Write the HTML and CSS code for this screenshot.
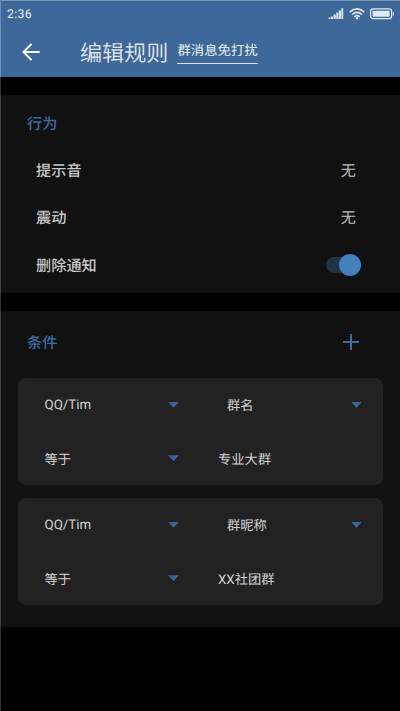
FILE: index.html
```
<!DOCTYPE html>
<html lang="zh-CN">
<head>
<meta charset="utf-8">
<title>编辑规则</title>
<link rel="stylesheet" href="styles.css">
</head>
<body>
<div class="screen">
  <header class="header">
    <div class="status">
      <span class="time">2:36</span>
      <div class="status-icons">
        <svg width="16" height="12" viewBox="0 0 16 12" fill="#e0e8f1"><path d="M.5 9.5h2V11h-2zM3.1 8.4h2V11h-2zM5.7 6.6h2V11h-2zM8.3 4.6h2V11h-2zM10.9 2.5h2V11h-2zM13.4.3h1.8V11h-1.8z"/></svg>
        <svg width="16" height="12" viewBox="0 0 16 12" fill="none" stroke="#e0e8f1" stroke-width="1.6"><path d="M.7 4.1Q8-2.2 15.3 4.1M3 6.5Q8 2.3 13 6.5M5.3 8.8Q8 6.6 10.7 8.8"/><circle cx="8" cy="10.3" r="1.2" fill="#e0e8f1" stroke="none"/></svg>
        <svg width="24" height="12" viewBox="0 0 24 12"><rect x=".6" y=".9" width="21" height="9.8" rx="2.6" fill="none" stroke="#e0e8f1" stroke-width="1.2"/><rect x="2.6" y="2.8" width="17" height="6" rx=".8" fill="#e0e8f1"/><path d="M22.7 4.2h1.2v3.2h-1.2z" fill="#e0e8f1"/></svg>
      </div>
    </div>
    <div class="toolbar">
      <svg class="back" width="18" height="18" viewBox="0 0 18 18" fill="none" stroke="#fff" stroke-width="2"><path d="M9.6.9L1.5 9l8.1 8.1M1.5 9h16.2"/></svg>
      <h1 class="title">编辑规则</h1>
      <span class="rule-name">群消息免打扰</span>
    </div>
  </header>

  <section class="panel">
    <div class="panel-head"><h2>行为</h2></div>
    <div class="setting"><span class="label">提示音</span><span class="value">无</span></div>
    <div class="setting"><span class="label">震动</span><span class="value">无</span></div>
    <div class="setting"><span class="label">删除通知</span><span class="switch"><span class="knob"></span></span></div>
  </section>

  <section class="panel conditions">
    <div class="panel-head"><h2>条件</h2>
      <svg width="16" height="16" viewBox="0 0 16 16" stroke="#3d6ba4" stroke-width="2"><path d="M8 0v16M0 8h16"/></svg>
    </div>
    <div class="card">
      <div class="select"><span class="latin">QQ/Tim</span><i class="caret"></i></div>
      <div class="select indent">群名<i class="caret"></i></div>
      <div class="select">等于<i class="caret"></i></div>
      <div class="select">专业大群</div>
    </div>
    <div class="card">
      <div class="select"><span class="latin">QQ/Tim</span><i class="caret"></i></div>
      <div class="select indent">群昵称<i class="caret"></i></div>
      <div class="select">等于<i class="caret"></i></div>
      <div class="select">XX社团群</div>
    </div>
  </section>
</div>
</body>
</html>
```
FILE: styles.css
```
* { box-sizing: border-box; }
body {
  margin: 0;
  background: #000;
  color: #d2d2d2;
  font-family: Roboto, "Noto Sans CJK SC", sans-serif;
  text-rendering: geometricPrecision;
}
.screen {
  height: 711px;
  overflow: hidden;
  box-shadow: inset 1px 0 #303030;
}
.header {
  height: 77px;
  background: #3e6899;
  border-top: 1px solid #7798b2;
  border-left: 1px solid #6c90b4;
}
.status {
  height: 26px;
  display: flex;
  align-items: center;
  justify-content: space-between;
  padding: 0 6px;
}
.time { font: 400 12.2px Roboto, sans-serif; color: #eaf0f6; letter-spacing: .4px; }
.status-icons { display: flex; gap: 5px; }
.toolbar { height: 50px; display: flex; align-items: center; padding-left: 21px; }
.title { margin: 3px 0 0 40px; font-size: 22.1px; font-weight: 350; line-height: 50px; color: #e2e6ec; }
.rule-name {
  margin: -1px 0 0 9px;
  padding-top: 2px;
  font-size: 13.4px;
  line-height: 22px;
  color: #e8edf3;
  border-bottom: 1px solid #d5dfe9;
}
.panel {
  height: 198px;
  margin-top: 18px;
  padding: 4px 18px 0;
  background: #111;
  border-left: 1px solid #414141;
}
.conditions { height: 316px; }
.panel-head { height: 48px; display: flex; align-items: center; justify-content: space-between; padding: 0 23px 0 8px; }
.panel-head h2 { margin: 0; padding-top: 2px; font-size: 15.2px; line-height: 24px; font-weight: 500; color: #3d6ba4; }
.conditions .panel-head { height: 54px; }
.setting { height: 47.3px; display: flex; align-items: center; justify-content: space-between; padding: 0 26px 0 17px; font-size: 15.2px; line-height: 22px; }
.label, .value { padding-top: 1px; }
.label { font-weight: 500; color: #c8c8c8; }
.value { color: #bdbdbd; }
.switch { display: flex; justify-content: flex-end; align-items: center; width: 34px; height: 16px; margin-right: -4px; border-radius: 8px; background: #203349; }
.knob { width: 22px; height: 22px; margin-right: -1px; border-radius: 50%; background: #4480bd; flex: none; }
.card {
  height: 107px;
  margin: 9px -1px 0;
  border-radius: 8px;
  background: #222;
  display: grid;
  grid-template-columns: 173.5px 1fr;
  grid-template-rows: 53.5px 53.5px;
  padding: 0 21px 0 26.5px;
}
.card + .card { margin-top: 13px; }
.select { display: flex; align-items: center; justify-content: space-between; font-size: 13.3px; padding-right: 39px; }
.latin { padding-top: 2px; }
.indent { padding-left: 9px; padding-right: 0; }
.caret { width: 11px; height: 6px; background: #3b6598; clip-path: polygon(0 0, 100% 0, 50% 100%); }
```
